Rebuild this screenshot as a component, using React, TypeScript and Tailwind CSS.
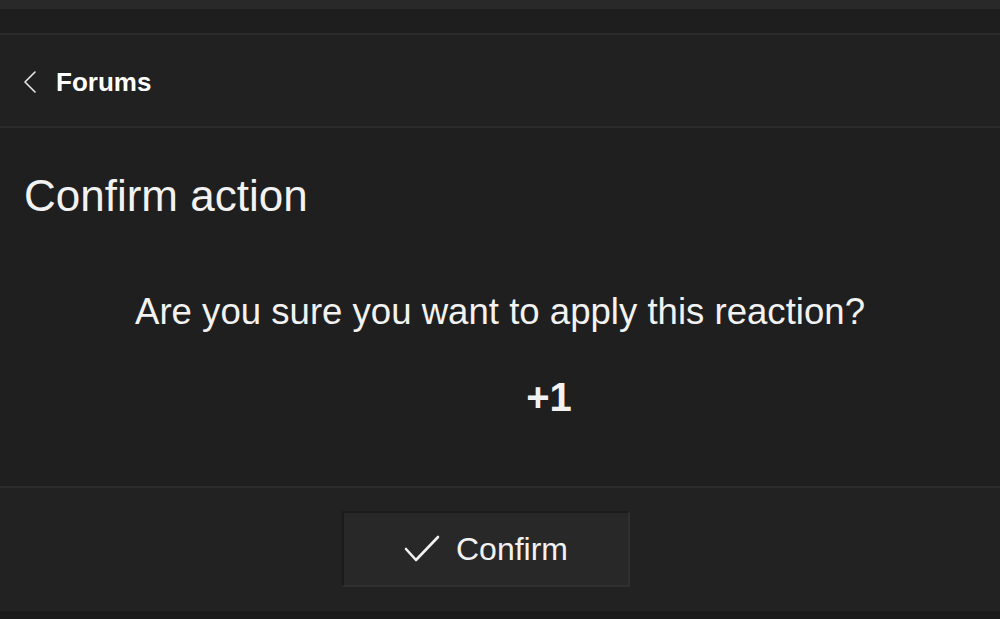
import React from 'react'

function BackChevron() {
  return (
    <svg width="14" height="24" viewBox="0 0 14 24" fill="none" className="shrink-0">
      <polyline points="12,2 2,12 12,22" stroke="#e6e6e6" strokeWidth="1.6" strokeLinecap="round" strokeLinejoin="round" />
    </svg>
  )
}

function CheckIcon() {
  return (
    <svg width="36" height="28" viewBox="0 0 36 28" fill="none" className="shrink-0">
      <polyline points="2,14 12,25 34,2" stroke="#f2f2f2" strokeWidth="2.6" strokeLinecap="round" strokeLinejoin="round" />
    </svg>
  )
}

export default function App() {
  return (
    <div className="flex h-[619px] w-full flex-col overflow-hidden bg-[#1f1f1f] font-['Liberation_Sans',Arial,sans-serif] text-[#f2f2f2]">
      <div className="h-[9px] shrink-0 bg-[#292929]" />
      <div className="h-[24px] shrink-0 bg-[#1e1e1e]" />

      <div className="flex h-[95px] shrink-0 items-center gap-[19px] border-y-2 border-[#2b2b2b] bg-[#212121] pl-[23px] pt-[2px]">
        <BackChevron />
        <span className="text-[26px] font-bold leading-none text-white">Forums</span>
      </div>

      <div className="flex flex-1 flex-col pt-[46px]">
        <h1 className="pl-[24px] text-[44px] leading-none font-normal">Confirm action</h1>
        <p className="mt-[76px] text-center text-[36.6px] leading-none">
          Are you sure you want to apply this reaction?
        </p>
        <div className="mt-[46px] pl-[98px] text-center text-[40px] font-bold leading-none">+1</div>
      </div>

      <div className="flex shrink-0 justify-center border-t-2 border-[#2c2c2c] bg-[#222222] pt-[23px] pb-[24px] pr-[28px]">
        <button className="flex h-[76px] w-[288px] items-center justify-center gap-[16px] border-2 border-[#303030] border-t-[#1b1b1b] border-l-[#1b1b1b] bg-[#282828]">
          <CheckIcon />
          <span className="text-[32px] leading-none">Confirm</span>
        </button>
      </div>

      <div className="h-[8px] shrink-0 bg-[#1a1a1a]" />
    </div>
  )
}
